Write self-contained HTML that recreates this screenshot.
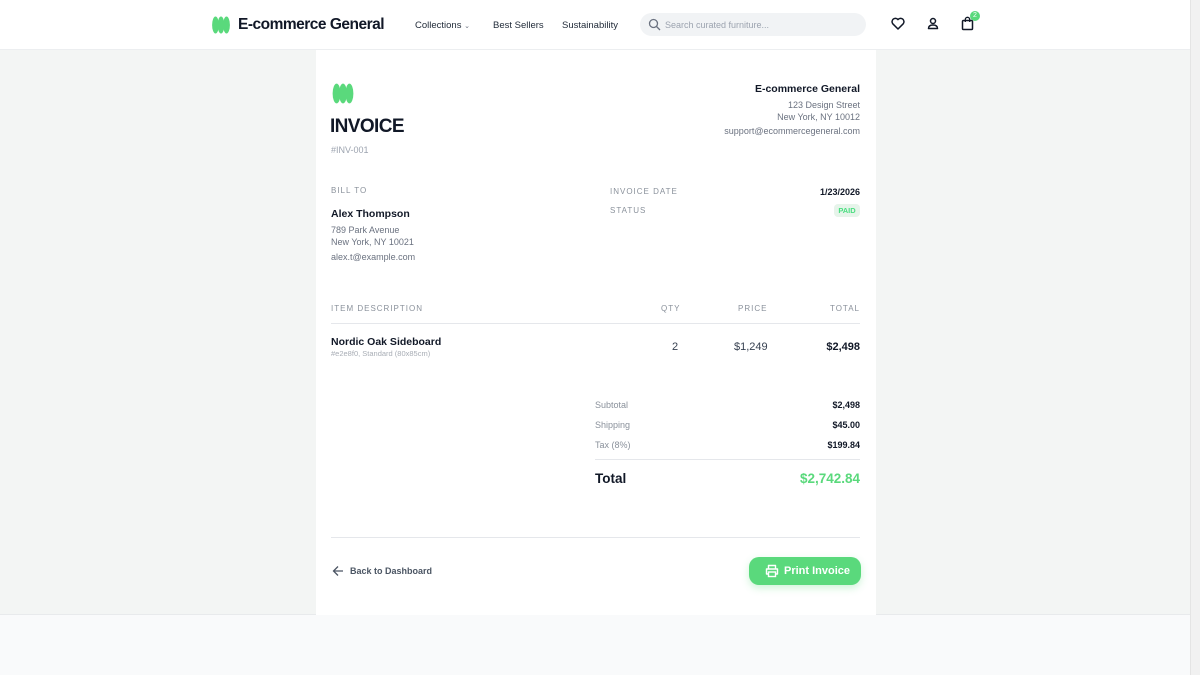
<!DOCTYPE html>
<html><head><meta charset="utf-8"><style>
*{box-sizing:border-box;margin:0;padding:0}
body{width:1200px;height:675px;overflow:hidden;font-family:"Liberation Sans",sans-serif;background:#f9fafb;color:#111827;position:relative}
.hdr{position:absolute;left:0;top:0;width:1190px;height:50px;background:#fff;border-bottom:1px solid #eceef0}
.main{position:absolute;left:0;top:50px;width:1190px;height:565px;background:#f3f5f4;border-bottom:1px solid #e8eaec}
.sb{position:absolute;right:0;top:0;width:10px;height:675px;background:#f1f1f1;border-left:1px solid #e4e4e4}
.card{position:absolute;left:316px;top:50px;width:560px;height:565px;background:#fff}
.a{position:absolute;white-space:nowrap}
.lbl{font-size:8px;letter-spacing:1px;color:#8a919b}
.g{color:#6b7280}
</style></head><body>
<div class="hdr">
<svg class="a" style="left:212px;top:16px" width="18" height="18" viewBox="0 0 18 18"><g fill="#5ad97c"><ellipse cx="3.5" cy="9" rx="3.4" ry="8.5"/><ellipse cx="9" cy="9" rx="3.4" ry="8.5"/><ellipse cx="14.5" cy="9" rx="3.4" ry="8.5"/></g></svg>
<div class="a" style="left:238px;top:16px;font-size:15.5px;font-weight:bold;color:#111827;letter-spacing:-.5px">E-commerce General</div>
<div class="a" style="left:415px;top:20px;font-size:9.5px;color:#1f2937">Collections <span style="font-size:7px;color:#6b7280">⌄</span></div>
<div class="a" style="left:493px;top:20px;font-size:9.5px;color:#1f2937">Best Sellers</div>
<div class="a" style="left:562px;top:20px;font-size:9.5px;color:#1f2937">Sustainability</div>
<div class="a" style="left:640px;top:13px;width:226px;height:23px;border-radius:12px;background:#f1f3f5"></div>
<svg class="a" style="left:648px;top:18px" width="13" height="13" viewBox="0 0 13 13"><circle cx="5.5" cy="5.5" r="4" fill="none" stroke="#6b7280" stroke-width="1.3"/><path d="M8.5 8.5L12 12" stroke="#6b7280" stroke-width="1.3"/></svg>
<div class="a" style="left:665px;top:20px;font-size:9px;color:#9ca3af">Search curated furniture...</div>
<svg class="a" style="left:891px;top:17px" width="14" height="13" viewBox="0 0 14 13"><path d="M7 12L1.8 6.8A3.1 3.1 0 0 1 7 2.6A3.1 3.1 0 0 1 12.2 6.8Z" fill="none" stroke="#111827" stroke-width="1.5" stroke-linejoin="round"/></svg>
<svg class="a" style="left:927px;top:17px" width="12" height="13" viewBox="0 0 12 13"><circle cx="6" cy="4" r="2.5" fill="none" stroke="#111827" stroke-width="1.5"/><path d="M1.5 11.5Q1.5 8 6 8Q10.5 8 10.5 11.5Z" fill="none" stroke="#111827" stroke-width="1.5" stroke-linejoin="round"/></svg>
<svg class="a" style="left:961px;top:16px" width="13" height="15" viewBox="0 0 13 15"><rect x="1.5" y="4.5" width="10" height="9" rx="1" fill="none" stroke="#111827" stroke-width="1.5"/><path d="M4.3 6V3.5a2.2 2.2 0 0 1 4.4 0V6" fill="none" stroke="#111827" stroke-width="1.3"/></svg>
<div class="a" style="left:970px;top:11px;width:10px;height:10px;border-radius:5px;background:#5ad97c;color:#fff;font-size:7px;text-align:center;line-height:10px">2</div>
</div>
<div class="main"></div>
<div class="card">
<svg class="a" style="left:16px;top:33px" width="22" height="21" viewBox="0 0 18 18"><g fill="#5ad97c"><ellipse cx="3.5" cy="9" rx="3.4" ry="8.5"/><ellipse cx="9" cy="9" rx="3.4" ry="8.5"/><ellipse cx="14.5" cy="9" rx="3.4" ry="8.5"/></g></svg>
<div class="a" style="left:14px;top:66px;font-size:19px;font-weight:bold;letter-spacing:-.6px">INVOICE</div>
<div class="a g" style="left:15px;top:95px;font-size:9px;color:#9ca3af">#INV-001</div>
<div class="a" style="right:16px;top:33px;font-size:10.5px;font-weight:bold;text-align:right">E-commerce General</div>
<div class="a g" style="right:16px;top:50px;font-size:9px">123 Design Street</div>
<div class="a g" style="right:16px;top:62px;font-size:9px">New York, NY 10012</div>
<div class="a g" style="right:16px;top:76px;font-size:9px">support@ecommercegeneral.com</div>
<div class="a lbl" style="left:15px;top:136px">BILL TO</div>
<div class="a" style="left:15px;top:158px;font-size:10.5px;font-weight:bold">Alex Thompson</div>
<div class="a g" style="left:15px;top:175px;font-size:9px">789 Park Avenue</div>
<div class="a g" style="left:15px;top:187px;font-size:9px">New York, NY 10021</div>
<div class="a g" style="left:15px;top:202px;font-size:9px">alex.t@example.com</div>
<div class="a lbl" style="left:294px;top:137px">INVOICE DATE</div>
<div class="a" style="right:16px;top:137px;font-size:9px;font-weight:bold">1/23/2026</div>
<div class="a lbl" style="left:294px;top:156px">STATUS</div>
<div class="a" style="right:16px;top:154px;width:26px;height:13px;border-radius:4px;background:#e6f4ea;color:#4ade80;font-size:7.5px;font-weight:bold;text-align:center;line-height:13px">PAID</div>
<div class="a lbl" style="left:15px;top:254px">ITEM DESCRIPTION</div>
<div class="a lbl" style="left:345px;top:254px">QTY</div>
<div class="a lbl" style="left:422px;top:254px">PRICE</div>
<div class="a lbl" style="right:16px;top:254px">TOTAL</div>
<div class="a" style="left:15px;top:273px;width:529px;height:1px;background:#e5e7eb"></div>
<div class="a" style="left:15px;top:286px;font-size:10.5px;font-weight:bold">Nordic Oak Sideboard</div>
<div class="a" style="left:15px;top:299px;font-size:7.5px;color:#a8adb5">#e2e8f0, Standard (80x85cm)</div>
<div class="a" style="left:356px;top:291px;font-size:11px;color:#374151">2</div>
<div class="a" style="left:418px;top:291px;font-size:11px;color:#374151">$1,249</div>
<div class="a" style="right:16px;top:291px;font-size:11px;font-weight:bold">$2,498</div>
<div class="a g" style="left:279px;top:350px;font-size:9px;color:#8a919b">Subtotal</div>
<div class="a" style="right:16px;top:350px;font-size:9px;font-weight:bold">$2,498</div>
<div class="a g" style="left:279px;top:370px;font-size:9px;color:#8a919b">Shipping</div>
<div class="a" style="right:16px;top:370px;font-size:9px;font-weight:bold">$45.00</div>
<div class="a g" style="left:279px;top:390px;font-size:9px;color:#8a919b">Tax (8%)</div>
<div class="a" style="right:16px;top:390px;font-size:9px;font-weight:bold">$199.84</div>
<div class="a" style="left:279px;top:409px;width:265px;height:1px;background:#e5e7eb"></div>
<div class="a" style="left:279px;top:421px;font-size:13.5px;font-weight:bold">Total</div>
<div class="a" style="right:16px;top:421px;font-size:13.5px;font-weight:bold;color:#5ad97c">$2,742.84</div>
<div class="a" style="left:15px;top:487px;width:529px;height:1px;background:#e5e7eb"></div>
<svg class="a" style="left:16px;top:515px" width="12" height="12" viewBox="0 0 12 12"><path d="M11 6H1.5M6 1.5L1.5 6L6 10.5" fill="none" stroke="#4b5563" stroke-width="1.3"/></svg>
<div class="a" style="left:34px;top:516px;font-size:9px;color:#4b5563;font-weight:bold">Back to Dashboard</div>
<div class="a" style="left:433px;top:507px;width:112px;height:28px;border-radius:10px;background:#5ad97c;box-shadow:0 3px 8px rgba(90,217,124,.3)"></div>
<svg class="a" style="left:449px;top:514px" width="14" height="14" viewBox="0 0 14 14"><path d="M3.5 5V1.5h7V5M3.5 10H1.5V5h11v5h-2" fill="none" stroke="#fff" stroke-width="1.4" stroke-linejoin="round"/><rect x="3.5" y="8" width="7" height="4.5" fill="none" stroke="#fff" stroke-width="1.4"/></svg>
<div class="a" style="left:468px;top:515px;font-size:11px;color:#fff;font-weight:bold">Print Invoice</div>
</div>
<div class="sb"></div>
</body></html>
